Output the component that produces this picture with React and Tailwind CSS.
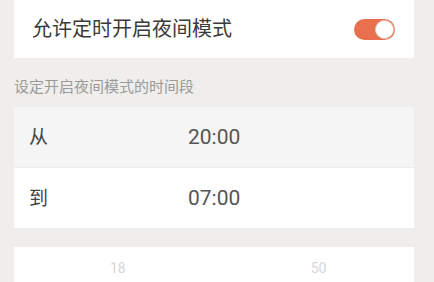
export default function App() {
  const font = { fontFamily: 'Roboto, "Noto Sans CJK SC", sans-serif' };
  return (
    <div className="w-[434px] h-[282px] overflow-hidden bg-[#efeeec]" style={font}>
      <div className="pl-[14px] w-[414px]">
        <div className="h-[58px] bg-white flex items-center justify-between pl-[18px] pr-[19px]">
          <span className="text-[20px] leading-none text-[#3a3a3a]">允许定时开启夜间模式</span>
          <div className="w-[41px] h-[21px] rounded-full bg-[#e9704c] flex items-center justify-end pr-[1px]">
            <div className="w-[19px] h-[19px] rounded-full bg-white border border-[#d9d0cc]" />
          </div>
        </div>
        <div className="h-[49px] flex items-center pt-[10px]">
          <span className="text-[15px] leading-none text-[#9a9a9a]">设定开启夜间模式的时间段</span>
        </div>
        <div className="h-[61px] bg-[#f5f5f5] flex items-center border-b border-[#ebebeb]">
          <span className="w-[174px] pl-[15px] text-[19px] leading-none text-[#444]">从</span>
          <span className="text-[21px] leading-none text-[#555]">20:00</span>
        </div>
        <div className="h-[60px] bg-white flex items-center">
          <span className="w-[174px] pl-[15px] text-[19px] leading-none text-[#444]">到</span>
          <span className="text-[21px] leading-none text-[#555]">07:00</span>
        </div>
        <div className="h-[19px]" />
        <div className="h-[40px] bg-white flex items-start pt-[14px]">
          <span className="ml-[96px] text-[14px] leading-none text-[#d6d6d6]">18</span>
          <span className="ml-[185px] text-[14px] leading-none text-[#d6d6d6]">50</span>
        </div>
      </div>
    </div>
  );
}
